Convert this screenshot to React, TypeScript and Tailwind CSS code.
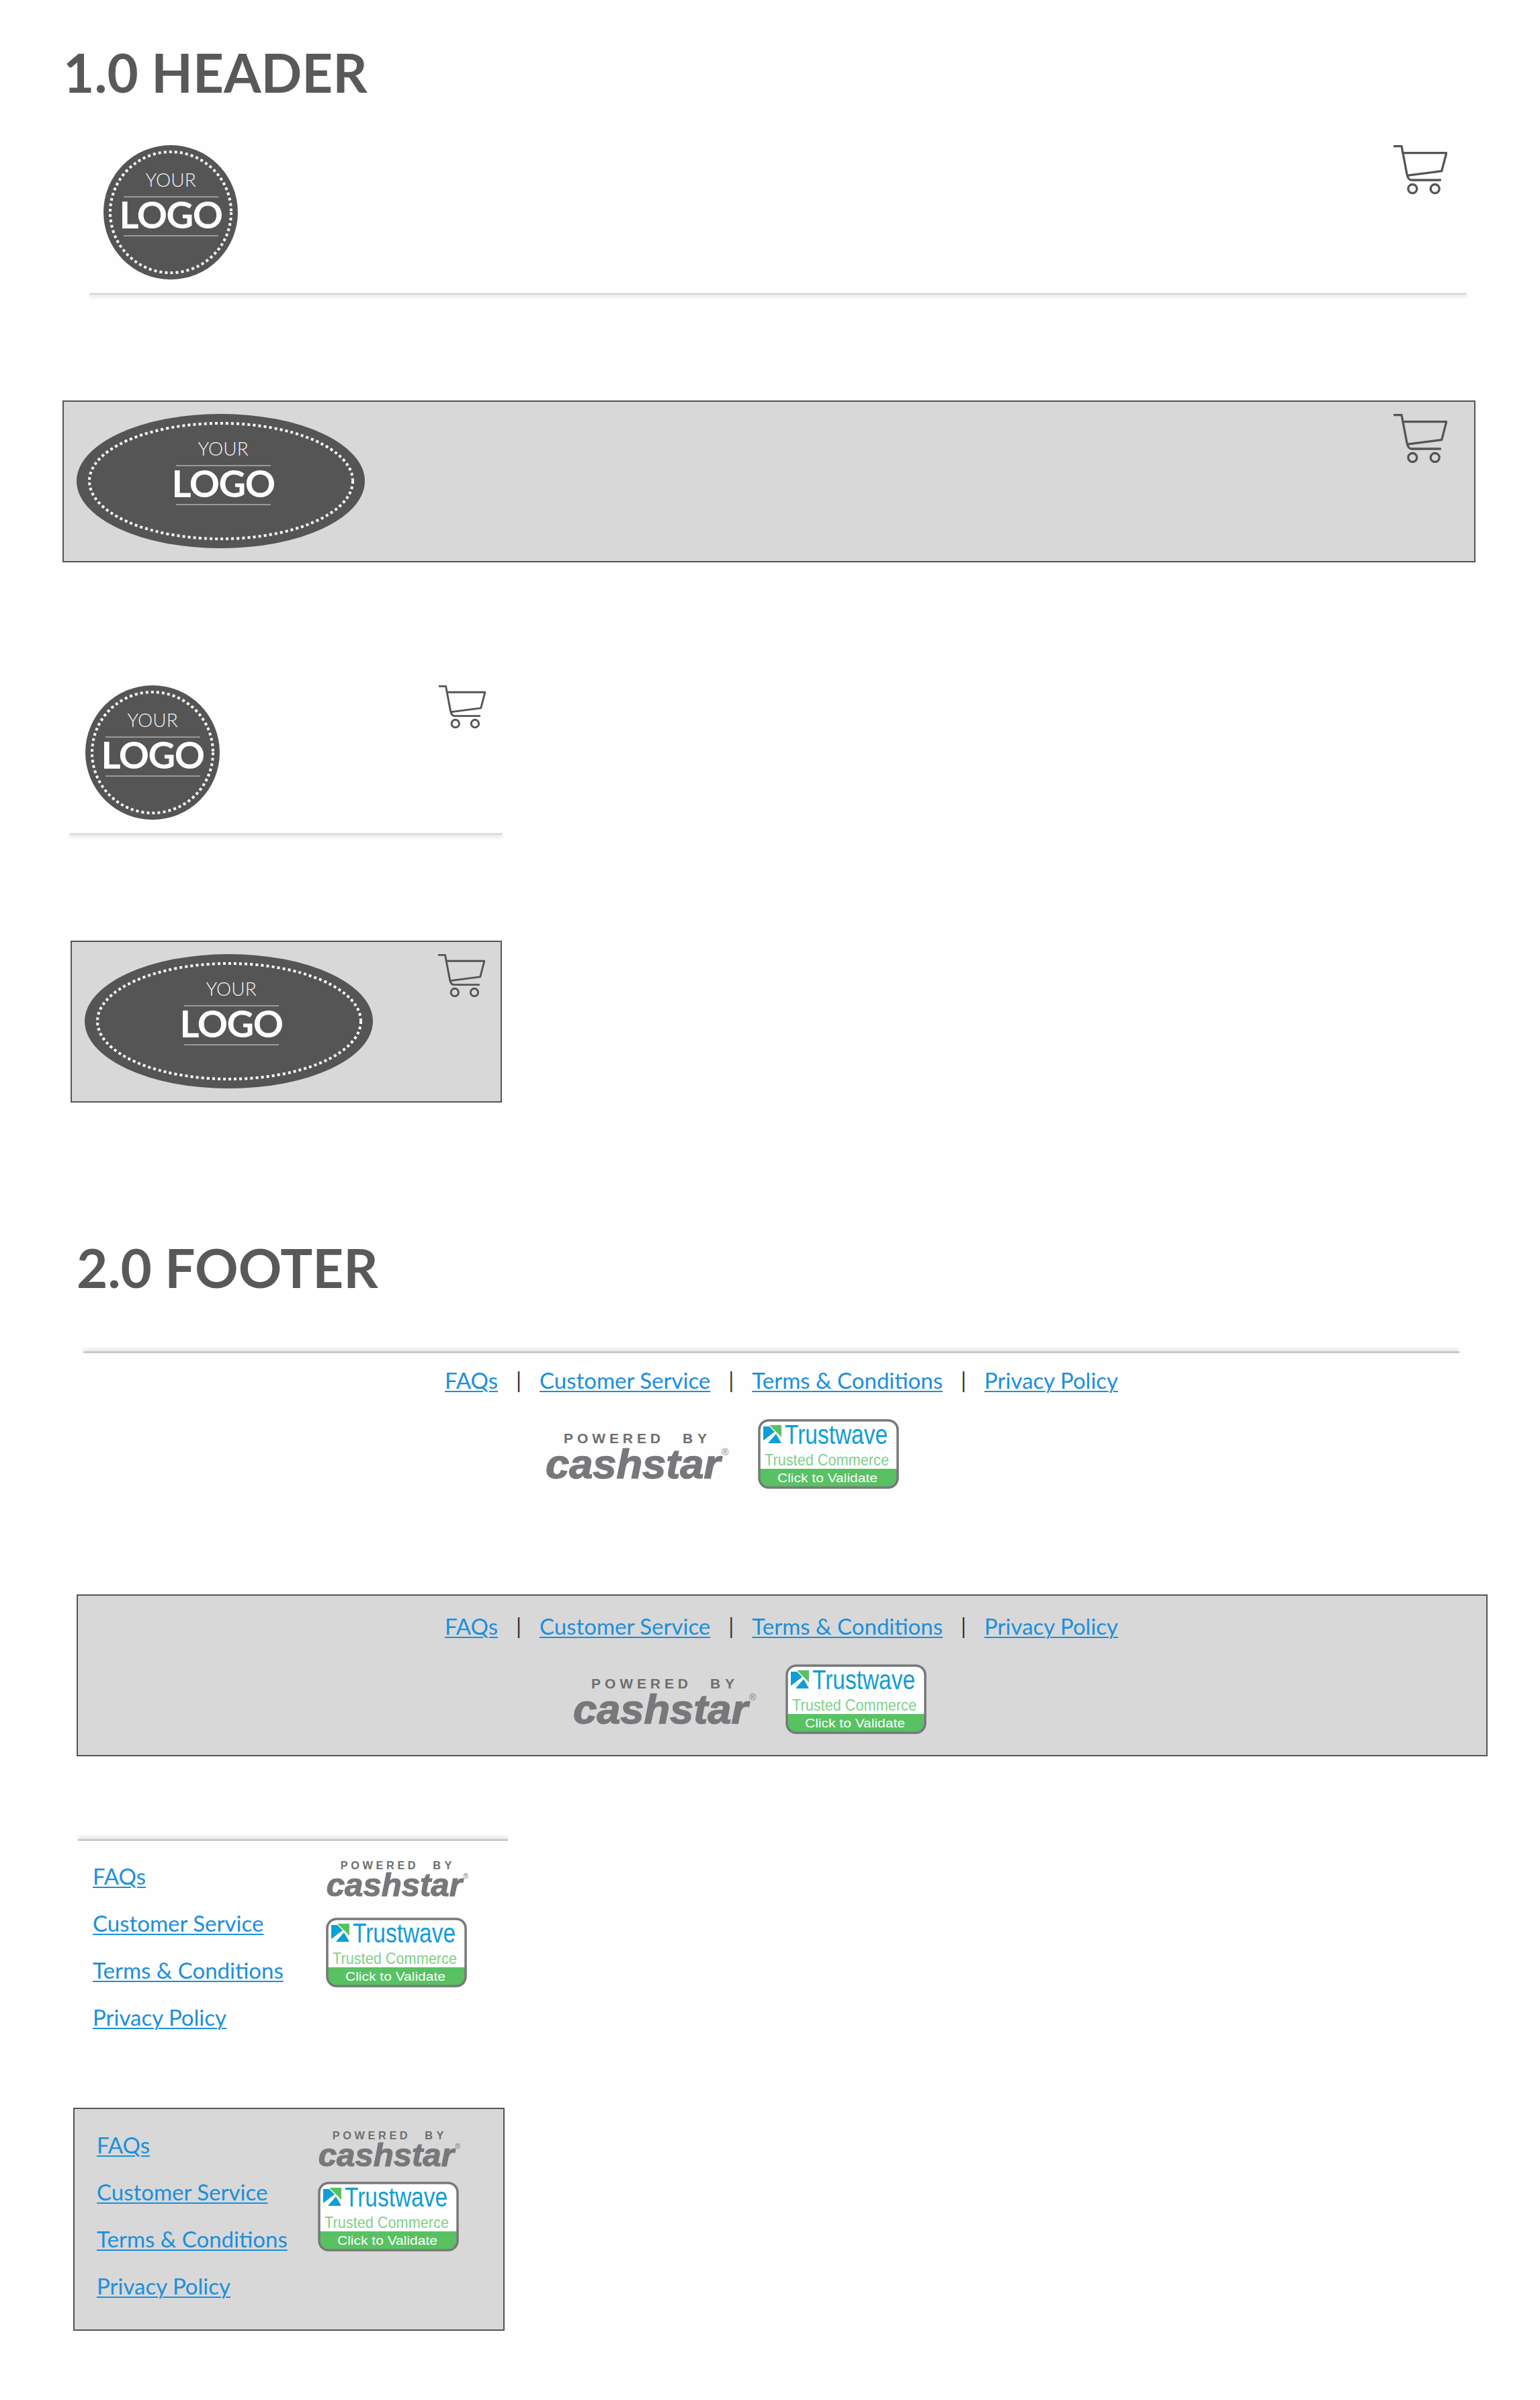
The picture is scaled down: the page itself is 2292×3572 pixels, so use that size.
import { ReactNode } from "react";

const font = "font-['Lato','Liberation_Sans',sans-serif]";

function Cart({ className = "w-[80px] h-[73px]" }: { className?: string }) {
  return (
    <svg viewBox="0 0 80 73" preserveAspectRatio="none" className={className} fill="none" stroke="#555" strokeWidth="3.300" strokeLinecap="round" strokeLinejoin="round">
      <path d="M1 1.5h11l8 42c1 5 3 8.500 7 8.500h42.500" />
      <path d="M14 11.700h64.700l-7 27-50.700 6.500" />
      <circle cx="28.300" cy="65" r="6.500" />
      <circle cx="61.700" cy="65" r="6.500" />
    </svg>
  );
}

function LogoArt({ width, cx, ring }: { width: number; cx: number; ring: ReactNode }) {
  return (
    <svg viewBox={`0 0 ${width} 200`} width={width} height={200} className="shrink-0">
      {ring}
      <text x={cx} y="62" textAnchor="middle" fontFamily="Lato" fontWeight="300" fontSize="28" fill="#f2f2f2">YOUR</text>
      <rect x={cx - 70} y="76" width="141" height="2" fill="#999" />
      <text x={cx} y="124" textAnchor="middle" fontFamily="Lato" fontWeight="700" fontSize="56" letterSpacing="-1.500" fill="#fff">LOGO</text>
      <rect x={cx - 70} y="134" width="141" height="2" fill="#999" />
    </svg>
  );
}

function CircleLogo() {
  return (
    <LogoArt
      width={200}
      cx={100}
      ring={
        <>
          <circle cx="100" cy="100" r="100" fill="#555" />
          <circle cx="100" cy="100" r="90" fill="none" stroke="#fff" strokeWidth="4" strokeDasharray="4 4.100" />
        </>
      }
    />
  );
}

function OvalLogo() {
  return (
    <LogoArt
      width={429}
      cx={218}
      ring={
        <>
          <ellipse cx="214.500" cy="100" rx="214.500" ry="100" fill="#555" />
          <ellipse cx="215" cy="100" rx="196" ry="86" fill="none" stroke="#fff" strokeWidth="4" strokeDasharray="4 4.100" />
        </>
      }
    />
  );
}

function Cashstar({ className }: { className: string }) {
  return (
    <svg viewBox="0 0 278 72" className={`overflow-visible ${className}`}>
      <text x="28" y="18" textLength="144" fontFamily="Liberation Sans" fontWeight="700" fontSize="21" fill="#6d6e71">POWERED</text>
      <text x="205" y="18" textLength="36" fontFamily="Liberation Sans" fontWeight="700" fontSize="21" fill="#6d6e71">BY</text>
      <text x="1" y="70" textLength="260" lengthAdjust="spacingAndGlyphs" fontFamily="Liberation Sans" fontWeight="700" fontStyle="italic" fontSize="62" fill="#77787b" stroke="#77787b" strokeWidth="1.500">cashstar</text>
      <text x="263" y="36" fontFamily="Liberation Sans" fontSize="14" fill="#77787b">®</text>
    </svg>
  );
}

function Trustwave({ className = "w-[210px] h-[104px]" }: { className?: string }) {
  return (
    <svg viewBox="0 0 210 104" className={className}>
      <rect x="2" y="2" width="206" height="100" rx="14" fill="#fff" />
      <path d="M2 74h206v14a14 14 0 0 1-14 14H16A14 14 0 0 1 2 88z" fill="#58c262" />
      <rect x="2" y="2" width="206" height="100" rx="14" fill="none" stroke="#77787b" strokeWidth="3.500" />
      <path d="M8 11h9l8 8L8 32z" fill="#0f9ed5" />
      <path d="M17 9h18v18z" fill="#58c262" />
      <path d="M27 22l8 14H15z" fill="#0f9ed5" />
      <text x="40" y="37" textLength="153" lengthAdjust="spacingAndGlyphs" fontFamily="Liberation Sans" fontSize="40" fill="#0f9ed5">Trustwave</text>
      <text x="10" y="69" textLength="185" lengthAdjust="spacingAndGlyphs" fontFamily="Liberation Sans" fontSize="24" fill="#7fd08a">Trusted Commerce</text>
      <text x="29" y="94" textLength="149" lengthAdjust="spacingAndGlyphs" fontFamily="Liberation Sans" fontSize="18" fill="#fff">Click to Validate</text>
    </svg>
  );
}

function FooterLink({ children }: { children: ReactNode }) {
  return (
    <a href="#" className="text-[33px] leading-[40px] text-[#1b8fdd] underline underline-offset-[3px] decoration-2 whitespace-nowrap">
      {children}
    </a>
  );
}

const links = ["FAQs", "Customer Service", "Terms & Conditions", "Privacy Policy"];

function LinkRow({ className }: { className: string }) {
  return (
    <div className={`flex items-center gap-[27px] ${className}`}>
      {links.map((l, i) => (
        <div key={l} className="flex items-center gap-[27px]">
          {i > 0 && <span className="text-[32px] leading-[40px] text-[#333]">|</span>}
          <FooterLink>{l}</FooterLink>
        </div>
      ))}
    </div>
  );
}

function LinkColumn({ width }: { width: string }) {
  return (
    <div className={`flex flex-col gap-[30px] items-start ${width}`}>
      {links.map((l) => (
        <FooterLink key={l}>{l}</FooterLink>
      ))}
    </div>
  );
}

export default function App() {
  return (
    <div className={`${font} bg-white h-[3572px] overflow-hidden text-[#58595b]`}>
      {/* 1.0 header */}
      <h1 className="text-[80px] leading-[96px] font-bold pt-[59px] pl-[94px]">1.0 HEADER</h1>

      <div className="ml-[100px] mt-[40px] w-[2090px] h-[241px] bg-[#fefefe] flex items-start justify-between pt-[21px] pl-[54px] pr-[36px]">
        <CircleLogo />
        <Cart />
      </div>
      <div className="ml-[133px] w-[2050px] h-[3px] bg-[#dcdcdc] shadow-[0_3px_5px_rgba(0,0,0,0.14)]" />

      <div className="ml-[93px] mt-[157px] w-[2103px] h-[241px] bg-[#d8d8d8] border-2 border-[#555] flex items-start justify-between pt-[18px] pl-[19px] pr-[40px]">
        <OvalLogo />
        <Cart />
      </div>

      <div className="ml-[100px] mt-[163px] w-[720px] h-[240px] bg-[#fefefe] flex items-start pt-[20px] pl-[27px]">
        <CircleLogo />
        <Cart className="ml-[326px] w-[70px] h-[64px]" />
      </div>
      <div className="ml-[103px] w-[645px] h-[3px] bg-[#dcdcdc] shadow-[0_3px_5px_rgba(0,0,0,0.14)]" />

      <div className="ml-[105px] mt-[157px] w-[642px] h-[241px] bg-[#d8d8d8] border-2 border-[#555] flex items-start justify-between pt-[18px] pl-[19px] pr-[23px]">
        <OvalLogo />
        <Cart className="w-[70px] h-[64px]" />
      </div>

      {/* 2.0 footer */}
      <h1 className="text-[80px] leading-[96px] font-bold mt-[197px] pl-[114px]">2.0 FOOTER</h1>

      <div className="ml-[124px] mt-[77px] w-[2048px] h-[3px] bg-[#c8c8c8] shadow-[0_-3px_5px_rgba(0,0,0,0.16)]" />
      <div className="ml-[100px] w-[2095px] h-[240px] bg-[#fefefe] flex flex-col pt-[20px]">
        <LinkRow className="ml-[562px]" />
        <div className="flex items-start ml-[711px] mt-[38px]">
          <Cashstar className="w-[278px] h-[72px] mt-[18px]" />
          <Trustwave className="ml-[39px] w-[210px] h-[104px]" />
        </div>
      </div>

      <div className="ml-[114px] mt-[119px] w-[2100px] h-[241px] bg-[#d8d8d8] border-2 border-[#555] flex flex-col pt-[25px]">
        <LinkRow className="ml-[546px]" />
        <div className="flex items-start ml-[736px] mt-[37px]">
          <Cashstar className="w-[278px] h-[72px] mt-[18px]" />
          <Trustwave className="ml-[39px] w-[210px] h-[104px]" />
        </div>
      </div>

      <div className="ml-[116px] mt-[123px] w-[640px] h-[3px] bg-[#c8c8c8] shadow-[0_-3px_5px_rgba(0,0,0,0.16)]" />
      <div className="ml-[116px] w-[704px] h-[310px] bg-[#fefefe] flex items-start pt-[32px] pl-[22px]">
        <LinkColumn width="w-[347px]" />
        <div className="flex flex-col gap-[30px] -mt-[4px]">
          <Cashstar className="w-[216px] h-[56px]" />
          <Trustwave />
        </div>
      </div>

      <div className="ml-[109px] mt-[87px] w-[642px] h-[332px] bg-[#d8d8d8] border-2 border-[#555] flex items-start pt-[33px] pl-[33px]">
        <LinkColumn width="w-[329px]" />
        <div className="flex flex-col gap-[21px] -mt-[2px]">
          <Cashstar className="w-[216px] h-[56px]" />
          <Trustwave />
        </div>
      </div>
    </div>
  );
}
